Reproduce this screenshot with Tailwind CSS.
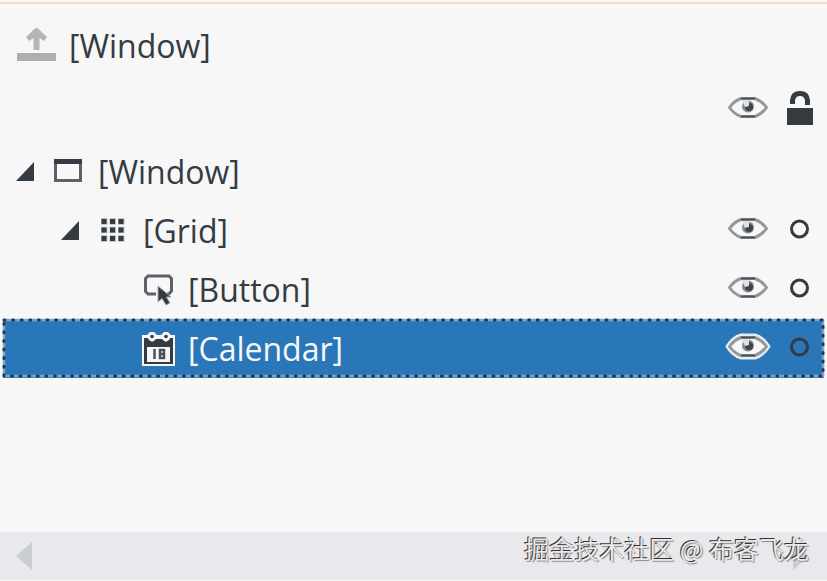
<!DOCTYPE html>
<html lang="en">

<head>
    <meta charset="utf-8">
    <meta name="viewport" content="width=device-width, initial-scale=1">
    <title>Objects and Timeline</title>
    <script src="https://cdn.jsdelivr.net/npm/@tailwindcss/browser@4"></script>
</head>

<body class="min-h-screen flex flex-col bg-[#f7f7f8] text-[#343b43] text-[32px] leading-10 font-['Open_Sans','Noto_Sans_CJK_SC',sans-serif]">
    <!-- shared shapes -->
    <svg class="hidden">
        <symbol id="eye" viewBox="0 0 40 24">
            <path d="M1.500 11.500 Q6 5 13 2.500 H27 Q34 5 38.500 11.500 Q34 18 27 20.500 H13 Q6 18 1.500 11.500Z" fill="#f7f7f8" stroke="#94989c" stroke-width="3" stroke-linejoin="round" />
            <path d="M13 2.500H27M13 20.500H27" stroke="#4d5359" stroke-width="2" />
            <circle cx="20" cy="10.500" r="6" fill="#868a8f" />
            <circle cx="21" cy="11" r="4" fill="#3d444b" />
            <path d="M14 4h7v6l-4 1z" fill="#dfe1e4" />
        </symbol>
        <symbol id="ring" viewBox="0 0 26 24">
            <circle cx="12.500" cy="12" r="8" fill="none" stroke="#343b43" stroke-width="3" />
        </symbol>
        <symbol id="expander" viewBox="0 0 18 20">
            <path d="M18 0V19H0Z" fill="#343b43" />
        </symbol>
    </svg>

    <header class="mt-[2px] border-t-2 border-[#f8ddb8]">
        <div class="h-[74px] pt-[10px] pl-4 pr-[14px] flex items-center gap-[13px]">
            <button type="button" aria-label="Return to parent scope" disabled>
                <svg class="w-10 h-9 block" viewBox="0 0 40 36">
                    <path d="M20.500-1 31 9 28 13 23.500 10V22H17.500V10L13 13 10 9Z" fill="#b4b7ba" />
                    <path d="M1 25H41V33H1Z" fill="#acafb2" />
                </svg>
            </button>
            <h1>[Window]</h1>
        </div>
        <div class="h-16 pr-[14px] pb-1 flex items-center justify-end gap-[19px]">
            <button type="button" aria-label="Show or hide all"><svg class="w-10 h-6 block"><use href="#eye" /></svg></button>
            <button type="button" aria-label="Lock or unlock all">
                <svg class="w-[26px] h-9 block" viewBox="0 0 26 36">
                    <path d="M5.500 14V10.500Q6 3.500 13 3.500T20.500 10.500V15" fill="none" stroke="#343b43" stroke-width="5" />
                    <path d="M0 18H26V35H0Z" fill="#343b43" />
                </svg>
            </button>
        </div>
    </header>

    <main class="grow">
        <ul>
            <li class="h-[59px] pl-4 pr-[14px] flex items-center">
                <button type="button" aria-label="Collapse Window" class="mr-5"><svg class="w-[18px] h-5 block"><use href="#expander" /></svg></button>
                <svg class="w-7 h-7 mr-4" viewBox="0 0 28 28">
                    <path d="M1.500 4V22.500H26.500V4" fill="none" stroke="#5c6268" stroke-width="3" />
                    <path d="M0 1H28V6H0Z" fill="#343b43" />
                </svg>
                <span>[Window]</span>
            </li>
            <li class="h-[59px] pl-[61px] pr-[14px] flex items-center">
                <button type="button" aria-label="Collapse Grid" class="mr-5"><svg class="w-[18px] h-5 block"><use href="#expander" /></svg></button>
                <svg class="w-7 h-7 mr-4" viewBox="0 0 28 28">
                    <path d="M2 4.500H26M2 13H26M2 21.500H26" stroke="#b9bcbf" stroke-width="6.500" stroke-dasharray="6.500 2" />
                    <path d="M2.500 4.500H26M2.500 13H26M2.500 21.500H26" stroke="#343b43" stroke-width="5" stroke-dasharray="5 3.500" />
                </svg>
                <span>[Grid]</span>
                <div class="ml-auto pb-1 flex items-center gap-[19px]">
                    <button type="button" aria-label="Toggle Grid visibility"><svg class="w-10 h-6 block"><use href="#eye" /></svg></button>
                    <button type="button" aria-label="Lock Grid"><svg class="w-[26px] h-6 block"><use href="#ring" /></svg></button>
                </div>
            </li>
            <li class="h-[59px] pl-36 pr-[14px] flex items-center">
                <svg class="w-7 h-7 mr-4 overflow-visible" viewBox="0 0 28 28">
                    <path d="M12 18H4L1.500 15.500V2.500L4 0H25L27.500 2.500V15L25 18H23" fill="none" stroke="#5c6268" stroke-width="3" />
                    <path d="M14 10V26L18 22.500 22 29 26 27 22.500 21H27Z" fill="#343b43" stroke="#a4a8ac" stroke-width="1" />
                </svg>
                <span>[Button]</span>
                <div class="ml-auto pb-1 flex items-center gap-[19px]">
                    <button type="button" aria-label="Toggle Button visibility"><svg class="w-10 h-6 block"><use href="#eye" /></svg></button>
                    <button type="button" aria-label="Lock Button"><svg class="w-[26px] h-6 block"><use href="#ring" /></svg></button>
                </div>
            </li>
            <!-- selected row -->
            <li class="relative h-[59px] mx-[3px] pl-[141px] pr-[11px] flex items-center bg-[#2977b8] text-[#f7f7f8]" aria-current="true">
                <svg class="absolute inset-0 w-full h-full pointer-events-none overflow-visible">
                    <rect x="1" y="1" class="w-[calc(100%-2px)] h-[calc(100%-3px)]" fill="none" stroke="#7ba6d0" stroke-width="2.500" />
                    <rect x="1" y="1" class="w-[calc(100%-2px)] h-[calc(100%-3px)]" fill="none" stroke="#23374d" stroke-width="3" stroke-linecap="round" stroke-dasharray="1 7.600" />
                </svg>
                <svg class="w-7 h-7 mr-4 overflow-visible" viewBox="0 0 28 28">
                    <path d="M-2 0H3L6-3H10L13 0H17L20-3H24L27 0H31V31H-2Z" fill="#f7f7f8" />
                    <path d="M0 3H4L8 7 12 4H18L22 7 26 3H29V29H0Z" fill="#343b43" />
                    <circle cx="8" cy="2" r="4" fill="#f7f7f8" />
                    <circle cx="22" cy="2" r="4" fill="#f7f7f8" />
                    <circle cx="8" cy="1.500" r="1.800" fill="#343b43" />
                    <circle cx="22" cy="1.500" r="1.800" fill="#343b43" />
                    <path d="M3 12H26V27H3Z" fill="#f7f7f8" />
                    <path d="M10.500 14V24M16 15H20V23H16ZM16 19H20" fill="none" stroke="#4a5158" stroke-width="2.500" />
                </svg>
                <span>[Calendar]</span>
                <div class="ml-auto pb-1 flex items-center gap-[19px]">
                    <button type="button" aria-label="Toggle Calendar visibility">
                        <svg class="w-10 h-6 block overflow-visible">
                            <path d="M-1 11.500Q5 2 13 0H27Q35 2 41 11.500Q35 21 27 23H13Q5 21-1 11.500Z" fill="#f7f7f8" stroke="#e6eef5" stroke-width="3" stroke-linejoin="round" />
                            <use href="#eye" />
                        </svg>
                    </button>
                    <button type="button" aria-label="Lock Calendar"><svg class="w-[26px] h-6 block"><use href="#ring" /></svg></button>
                </div>
            </li>
        </ul>
    </main>

    <footer class="h-12 mb-px pl-4 pr-[18px] flex items-center justify-between bg-[#e9e9ed]">
        <button type="button" aria-label="Scroll left"><svg class="w-4 h-7 block" viewBox="0 0 16 28"><path d="M16 0V28L0 14Z" fill="#c9ccd2" /></svg></button>
        <div class="relative">
            <button type="button" aria-label="Scroll right" class="block"><svg class="w-4 h-7 block" viewBox="0 0 16 28"><path d="M0 0V28L16 14Z" fill="#c9ccd2" /></svg></button>
            <p class="absolute right-0 bottom-[6px] text-[25px] leading-8 whitespace-nowrap text-[#e9e9ed] [text-shadow:-1px_-1px_0_#333,1px_1px_1px_#888] font-['Noto_Sans_CJK_SC',sans-serif]">掘金技术社区 @ 布客飞龙</p>
        </div>
    </footer>
</body>

</html>
